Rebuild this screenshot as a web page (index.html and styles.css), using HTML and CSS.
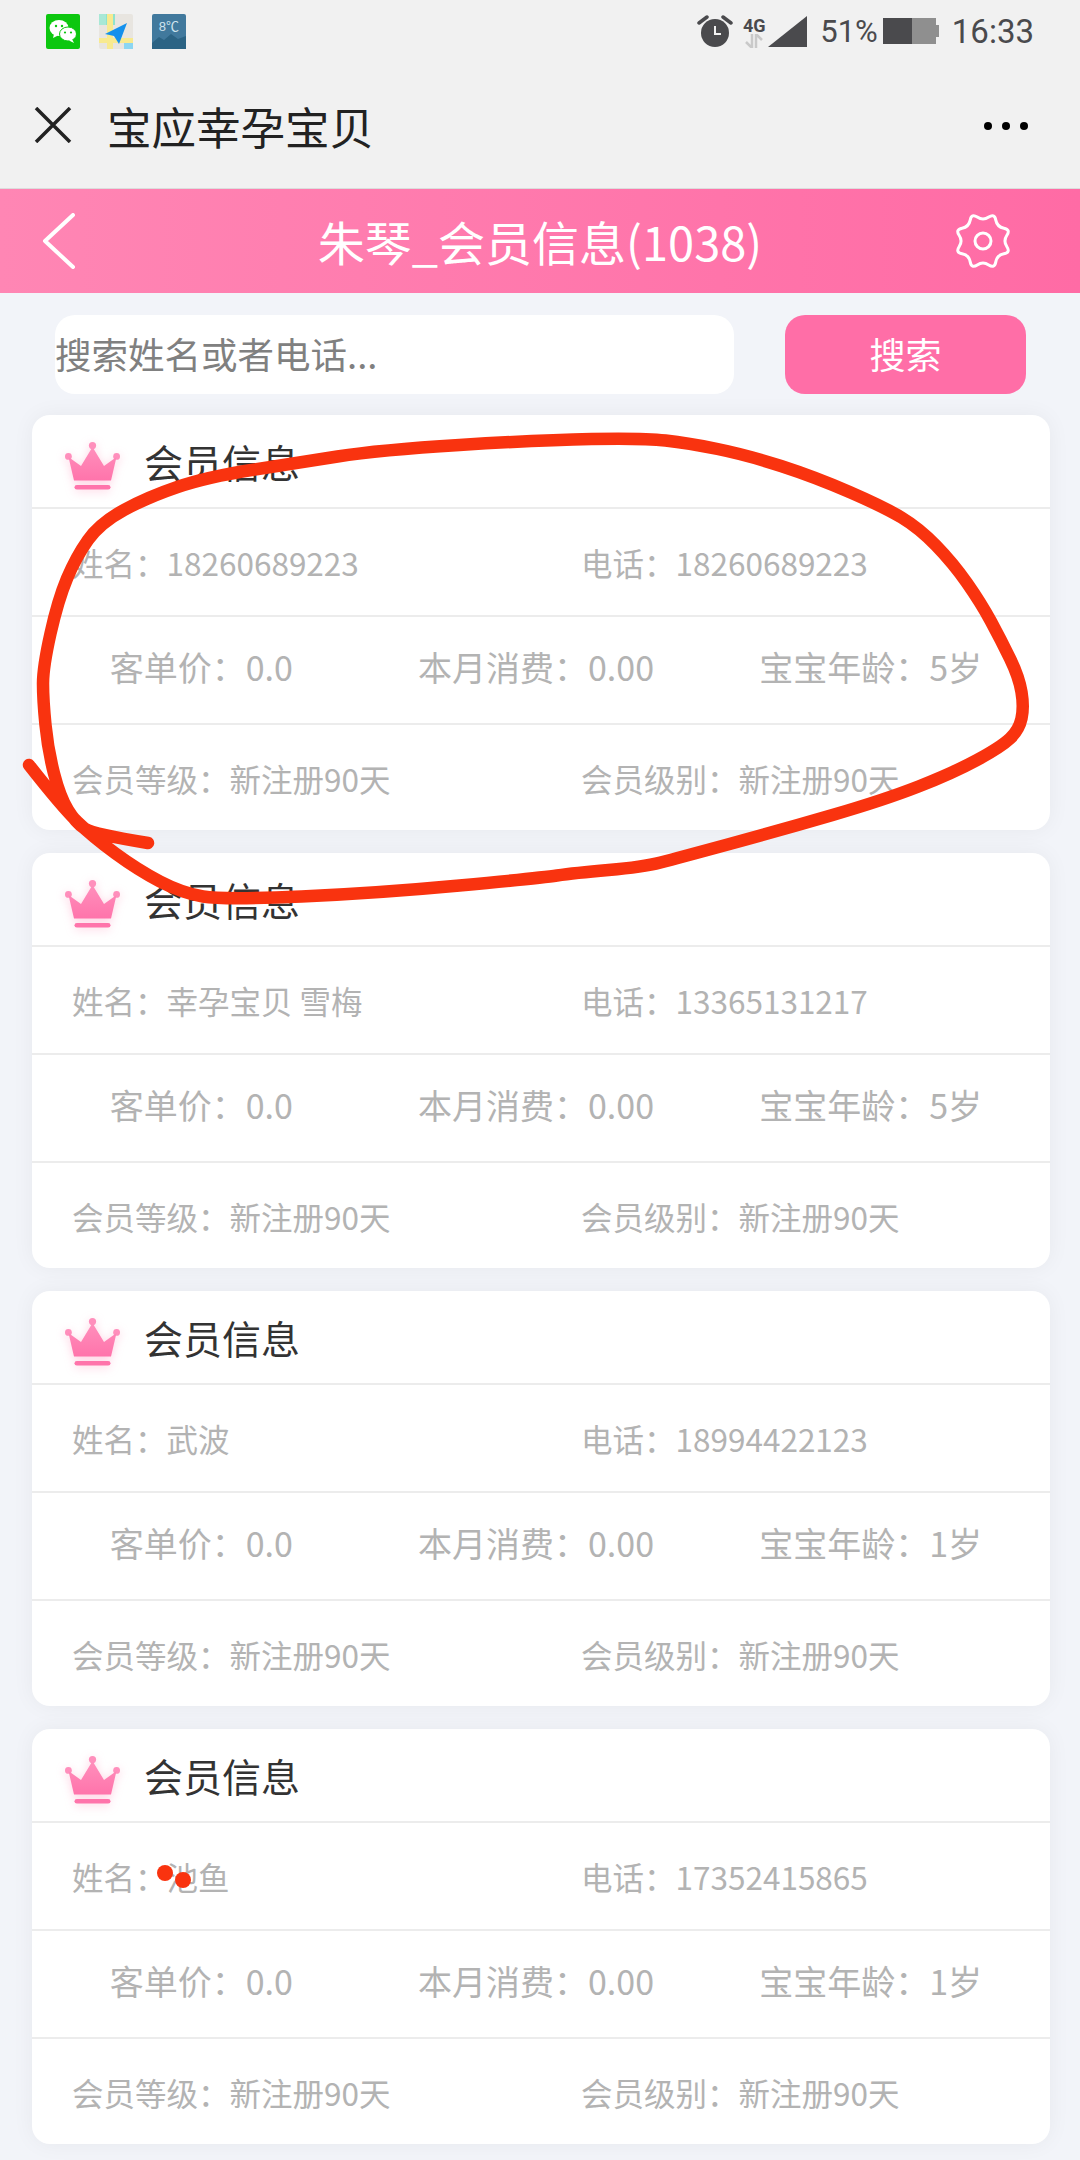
FILE: index.html
```html
<!DOCTYPE html>
<html lang="zh-CN">
<head>
    <meta charset="UTF-8">
    <title>会员信息</title>
    <link rel="stylesheet" href="styles.css">
</head>
<body>
    <svg class="defs" width="0" height="0">
        <defs>
            <linearGradient id="crownFill" x1="0" y1="0" x2="0" y2="1">
                <stop offset="0" stop-color="#ff8fbc"/>
                <stop offset="1" stop-color="#ff74ab"/>
            </linearGradient>
            <symbol id="crown" viewBox="0 0 55 48">
                <circle cx="27.5" cy="3.6" r="3.6" fill="#ff8fbc"/>
                <circle cx="3.4" cy="14.4" r="3.4" fill="#ff8fbc"/>
                <circle cx="51.6" cy="14.4" r="3.4" fill="#ff8fbc"/>
                <path d="M3.5 15 16 24 27.5 5 39 24 51.5 15 46 38.5H9Z" fill="url(#crownFill)"/>
                <rect x="9.5" y="43" width="36" height="4.6" rx="2.3" fill="#ff74ab"/>
            </symbol>
        </defs>
    </svg>

    <!-- phone status bar -->
    <div class="status-bar">
        <div class="status-apps">
            <svg class="app-icon" viewBox="0 0 34 35">
                <rect width="34" height="35" rx="2" fill="#0cc70f"/>
                <ellipse cx="13" cy="14" rx="9.5" ry="8" fill="#fff"/>
                <path d="M8 20l-1 4 5-2.500z" fill="#fff"/>
                <ellipse cx="22" cy="20" rx="8.500" ry="7" fill="#fff" stroke="#0cc70f" stroke-width="1"/>
                <path d="M26 25l2 4-5-2.500z" fill="#fff"/>
                <circle cx="10" cy="12" r="1.200" fill="#0cc70f"/>
                <circle cx="16" cy="12" r="1.200" fill="#0cc70f"/>
                <circle cx="19" cy="18.500" r="1.100" fill="#0cc70f"/>
                <circle cx="25" cy="18.500" r="1.100" fill="#0cc70f"/>
            </svg>
            <svg class="app-icon" viewBox="0 0 34 35">
                <rect width="34" height="35" rx="2" fill="#e8e5e0"/>
                <rect x="7" width="9" height="11" fill="#8fe3cd"/>
                <rect x="0" width="7" height="11" fill="#a8e8d6"/>
                <rect x="8" width="6" height="35" fill="#f8ea90"/>
                <rect y="24" width="34" height="5" fill="#f8ea90"/>
                <rect x="25" y="29" width="9" height="6" fill="#8cd6f2"/>
                <path d="M28 9 6 20l9 2 5 8z" fill="#1490ec"/>
            </svg>
            <svg class="app-icon" viewBox="0 0 34 35">
                <rect width="34" height="35" rx="2" fill="#41799d"/>
                <path d="M0 29l7-6 5 3 7-6 7 5 8-3v13H0z" fill="#2b6384"/>
                <text x="17" y="17" class="app-temp" text-anchor="middle">8℃</text>
            </svg>
        </div>
        <div class="status-right">
            <svg class="ic-alarm" viewBox="0 0 36 34">
                <circle cx="18" cy="19" r="14" fill="#4a4a4d"/>
                <path d="M18 12v8h6" fill="none" stroke="#f1f1f1" stroke-width="2"/>
                <path d="M2 9l8-6M34 9l-8-6" stroke="#4a4a4d" stroke-width="3.500" stroke-linecap="round"/>
            </svg>
            <div class="ic-net">
                <span class="net-label">4G</span>
                <svg width="20" height="14" viewBox="0 0 20 14">
                    <path d="M8 0v14L2 8M12 14V0l6 6" fill="none" stroke="#c9c9c9" stroke-width="2.500"/>
                </svg>
            </div>
            <svg class="ic-signal" width="39" height="31" viewBox="0 0 39 31">
                <path d="M0 31 39 0v31z" fill="#4a4a4d"/>
            </svg>
            <span class="status-pct">51%</span>
            <svg class="ic-battery" width="56" height="26" viewBox="0 0 56 26">
                <rect width="29" height="26" fill="#4a4a4d"/>
                <rect x="29" width="24" height="26" fill="#8f8f8f"/>
                <rect x="53" y="7" width="3" height="12" fill="#8f8f8f"/>
            </svg>
            <span class="status-time">16:33</span>
        </div>
    </div>

    <!-- webview title bar -->
    <div class="app-bar">
        <svg class="ic-close" width="38" height="36" viewBox="0 0 38 36">
            <path d="M2 1l34 34M36 1 2 35" stroke="#222" stroke-width="3.500" fill="none"/>
        </svg>
        <span class="app-title">宝应幸孕宝贝</span>
        <div class="app-more"><i></i><i></i><i></i></div>
    </div>

    <div class="page-head">
        <svg class="ic-back" width="34" height="56" viewBox="0 0 34 56">
            <path d="M31 2 3 28l28 26" fill="none" stroke="#fff" stroke-width="4" stroke-linecap="round" stroke-linejoin="round"/>
        </svg>
        <h1 class="page-title">朱琴_会员信息(1038)</h1>
        <svg class="ic-gear" width="60" height="60" viewBox="0 0 60 60">
            <path d="M53.900 35.750Q57.700 41.500 50.900 42.800 44.100 44.100 42.800 50.900 41.500 57.700 35.750 53.900 30 50 24.250 53.900 18.500 57.700 17.200 50.900 15.900 44.100 9.100 42.800 2.300 41.500 6.100 35.750 10 30 6.100 24.250 2.300 18.500 9.100 17.200 15.900 15.900 17.200 9.100 18.500 2.300 24.250 6.100 30 10 35.750 6.100 41.500 2.300 42.800 9.100 44.100 15.900 50.900 17.200 57.700 18.500 53.900 24.250 50 30 53.900 35.750Z" fill="none" stroke="#fff" stroke-width="3"/>
            <circle cx="30" cy="30" r="8" fill="none" stroke="#fff" stroke-width="3"/>
        </svg>
    </div>

    <div class="search-row">
        <div class="search-input">搜索姓名或者电话...</div>
        <div class="search-btn">搜索</div>
    </div>

    <div class="card-list">
        <div class="card">
            <div class="card-head"><svg class="crown"><use href="#crown"/></svg><span>会员信息</span></div>
            <div class="row row-2"><span>姓名：18260689223</span><span>电话：18260689223</span></div>
            <div class="row row-3"><span>客单价：0.0</span><span>本月消费：0.00</span><span>宝宝年龄：5岁</span></div>
            <div class="row row-2"><span>会员等级：新注册90天</span><span>会员级别：新注册90天</span></div>
        </div>
        <div class="card">
            <div class="card-head"><svg class="crown"><use href="#crown"/></svg><span>会员信息</span></div>
            <div class="row row-2"><span>姓名：幸孕宝贝 雪梅</span><span>电话：13365131217</span></div>
            <div class="row row-3"><span>客单价：0.0</span><span>本月消费：0.00</span><span>宝宝年龄：5岁</span></div>
            <div class="row row-2"><span>会员等级：新注册90天</span><span>会员级别：新注册90天</span></div>
        </div>
        <div class="card">
            <div class="card-head"><svg class="crown"><use href="#crown"/></svg><span>会员信息</span></div>
            <div class="row row-2"><span>姓名：武波</span><span>电话：18994422123</span></div>
            <div class="row row-3"><span>客单价：0.0</span><span>本月消费：0.00</span><span>宝宝年龄：1岁</span></div>
            <div class="row row-2"><span>会员等级：新注册90天</span><span>会员级别：新注册90天</span></div>
        </div>
        <div class="card">
            <div class="card-head"><svg class="crown"><use href="#crown"/></svg><span>会员信息</span></div>
            <div class="row row-2"><span>姓名：池鱼</span><span>电话：17352415865</span></div>
            <div class="row row-3"><span>客单价：0.0</span><span>本月消费：0.00</span><span>宝宝年龄：1岁</span></div>
            <div class="row row-2"><span>会员等级：新注册90天</span><span>会员级别：新注册90天</span></div>
        </div>
    </div>

    <!-- hand-drawn red marks on top of the page -->
    <svg class="scribble" width="1080" height="2160" viewBox="0 0 1080 2160">
        <path d="M148 843Q93 834 84.500 828.500 76 823 68 810 60 797 54 773.500 48 750 45.500 725 43 700 43 683.500 43 667 50.500 633.500 58 600 67 578.500 76 557 88 540 100 523 124 510 148 497 177.500 487 207 477 251.500 470 296 463 337.500 456.500 379 450 459.500 445 540 440 591.500 439 643 438 665.500 440.500 688 443 717.500 449 747 455 781 466 815 477 849.500 492 884 507 901.500 517.500 919 528 936 545.500 953 563 967 583 981 603 991 621.500 1001 640 1010 658.500 1019 677 1021.500 692 1024 707 1021.500 718.500 1019 730 1010 738.500 1001 747 977 760 953 773 918.500 786.500 884 800 832.500 815 781 830 729.500 844 678 858 660.500 862.500 643 867 608.500 870 574 873 557 875.500 540 878 459.500 885.500 379 893 301.500 896.500 224 900 203 896.500 182 893 160 881.500 138 870 115.500 853.500 93 837 77.500 822 62 807 29 765" fill="none" stroke="#f9330f" stroke-width="12.500" stroke-linecap="round" stroke-linejoin="round"/>
        <circle cx="165" cy="1873" r="8" fill="#f9330f"/>
        <circle cx="183" cy="1880" r="8" fill="#f9330f"/>
    </svg>
</body>
</html>
```

FILE: styles.css
```css
* {
    box-sizing: border-box;
}

html, body {
    margin: 0;
    padding: 0;
}

body {
    position: relative;
    width: 1080px;
    height: 2160px;
    overflow: hidden;
    background: #f2f4f9;
    font-family: "Noto Sans CJK SC", "Noto Sans", sans-serif;
}

.defs {
    position: absolute;
}

/* status bar */
.status-bar {
    display: flex;
    justify-content: space-between;
    align-items: center;
    height: 62px;
    padding: 0 46px;
    background: #f1f1f1;
    color: #4a4a4d;
    font-family: Roboto, sans-serif;
}

.status-apps {
    display: flex;
    gap: 19px;
}

.app-icon {
    width: 34px;
    height: 35px;
}

.app-temp {
    font-family: "Liberation Mono", monospace;
    font-size: 13px;
    fill: #cfe3ee;
}

.status-right {
    display: flex;
    align-items: center;
}

.ic-alarm {
    width: 36px;
    height: 34px;
}

.ic-net {
    display: flex;
    flex-direction: column;
    align-items: center;
    width: 24px;
    margin-left: 9px;
    margin-top: 2px;
}

.net-label {
    font-size: 18px;
    font-weight: 700;
    line-height: 17px;
}

.ic-signal {
    margin-left: 2px;
}

.status-pct {
    margin-left: 13px;
    font-size: 31px;
}

.ic-battery {
    margin-left: 5px;
}

.status-time {
    margin-left: 13px;
    font-size: 33px;
}

/* title bar */
.app-bar {
    display: flex;
    align-items: center;
    height: 127px;
    padding: 0 52px 0 34px;
    background: #f1f1f1;
    border-bottom: 1px solid #dcdcdc;
}

.app-title {
    margin-left: 35px;
    color: #222;
    font-size: 44.5px;
}

.app-more {
    display: flex;
    gap: 10px;
    margin-top: 2px;
    margin-left: auto;
}

.app-more i {
    width: 8px;
    height: 8px;
    border-radius: 50%;
    background: #000;
}

/* pink page header */
.page-head {
    display: grid;
    grid-template-columns: 1fr auto 1fr;
    align-items: center;
    height: 104px;
    padding: 0 42px;
    background: linear-gradient(90deg, #ff86b4 0%, #ff6ba5 100%);
}

.page-title {
    margin: 0 0 2px;
    color: #fff;
    font-size: 47px;
    font-weight: 400;
    white-space: nowrap;
}

.ic-gear {
    justify-self: end;
    margin-right: 25px;
}

/* search */
.search-row {
    display: flex;
    justify-content: space-between;
    height: 79px;
    margin-top: 22px;
    padding: 0 54px 0 55px;
}

.search-input {
    display: flex;
    align-items: center;
    width: 679px;
    padding-bottom: 3px;
    border-radius: 20px;
    background: #fff;
    color: #808080;
    font-size: 36.5px;
}

.search-btn {
    display: flex;
    align-items: center;
    justify-content: center;
    width: 241px;
    padding-bottom: 3px;
    border-radius: 20px;
    background: #ff6ea7;
    color: #fff;
    font-size: 36px;
}

/* member cards */
.card-list {
    display: flex;
    flex-direction: column;
    gap: 23px;
    margin-top: 21px;
    padding: 0 30px 0 32px;
}

.card {
    height: 415px;
    border-radius: 18px;
    background: #fff;
    box-shadow: 0 0 22px rgba(0, 0, 0, 0.05);
}

.card-head {
    display: flex;
    align-items: center;
    gap: 24px;
    height: 94px;
    padding: 9px 0 0 33px;
    border-bottom: 2px solid #ececec;
    color: #333;
    font-size: 39px;
}

.card-head span {
    margin-top: -9px;
}

.crown {
    width: 55px;
    height: 48px;
    filter: drop-shadow(0 2px 5px rgba(255, 120, 170, 0.35));
}

.row {
    display: grid;
    align-items: center;
    height: 108px;
    border-bottom: 2px solid #ececec;
    color: #b3b3b3;
    font-size: 31.5px;
}

.row:last-child {
    height: 105px;
    border-bottom: none;
}

.row-2 {
    grid-template-columns: 1fr 1fr;
}

.row-2 span {
    padding-left: 40px;
}

.row-3 {
    grid-template-columns: repeat(3, 1fr);
    padding: 0 12px 7px 2px;
    font-size: 34px;
    text-align: center;
}

.scribble {
    position: absolute;
    top: 0;
    left: 0;
    pointer-events: none;
}
```
